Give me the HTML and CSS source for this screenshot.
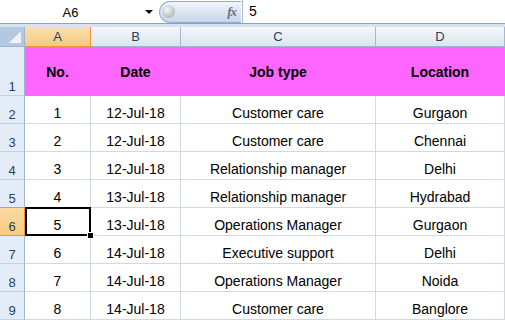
FILE: index.html
```html
<!DOCTYPE html>
<html lang="en">
<head>
    <meta charset="UTF-8">
    <title>Sheet1</title>
    <link rel="stylesheet" href="styles.css">
</head>
<body>
<div class="formula-bar">
    <div class="name-box">A6</div>
    <div class="name-arrow"></div>
    <div class="fx-pill">
        <span class="knob"></span>
        <span class="fx">fx</span>
    </div>
    <div class="formula">5</div>
</div>
<div class="band"></div>
<div class="sheet">
    <!-- column headers -->
    <div class="corner"><span class="corner-tri"></span></div>
    <div class="col-head selected">A</div>
    <div class="col-head">B</div>
    <div class="col-head">C</div>
    <div class="col-head">D</div>

    <div class="row-head">1</div>
    <div class="cell title">No.</div>
    <div class="cell title">Date</div>
    <div class="cell title">Job type</div>
    <div class="cell title">Location</div>

    <div class="row-head">2</div>
    <div class="cell">1</div>
    <div class="cell">12-Jul-18</div>
    <div class="cell">Customer care</div>
    <div class="cell">Gurgaon</div>

    <div class="row-head">3</div>
    <div class="cell">2</div>
    <div class="cell">12-Jul-18</div>
    <div class="cell">Customer care</div>
    <div class="cell">Chennai</div>

    <div class="row-head">4</div>
    <div class="cell">3</div>
    <div class="cell">12-Jul-18</div>
    <div class="cell">Relationship manager</div>
    <div class="cell">Delhi</div>

    <div class="row-head">5</div>
    <div class="cell">4</div>
    <div class="cell">13-Jul-18</div>
    <div class="cell">Relationship manager</div>
    <div class="cell">Hydrabad</div>

    <div class="row-head selected">6</div>
    <div class="cell active">5<span class="handle"></span></div>
    <div class="cell">13-Jul-18</div>
    <div class="cell">Operations Manager</div>
    <div class="cell">Gurgaon</div>

    <div class="row-head">7</div>
    <div class="cell">6</div>
    <div class="cell">14-Jul-18</div>
    <div class="cell">Executive support</div>
    <div class="cell">Delhi</div>

    <div class="row-head">8</div>
    <div class="cell">7</div>
    <div class="cell">14-Jul-18</div>
    <div class="cell">Operations Manager</div>
    <div class="cell">Noida</div>

    <div class="row-head">9</div>
    <div class="cell">8</div>
    <div class="cell">14-Jul-18</div>
    <div class="cell">Customer care</div>
    <div class="cell">Banglore</div>
</div>
</body>
</html>
```

FILE: styles.css
```css
*{
    margin:0;
    padding:0;
    box-sizing: border-box;
}
html,body{
    width:100%;
    height:100%;
    overflow: hidden;
}
body{
    background: #fff;
    font-family: "Liberation Sans", Arial, sans-serif;
    color: #000;
}
/* formula bar */
.formula-bar{
    height: 24px;
    display: flex;
    align-items: center;
    border-bottom: 1px solid #8aa2c0;
    background: #fff;
}
.name-box{
    width: 141px;
    text-align: center;
    font-size: 13px;
    padding-top: 1px;
}
.name-arrow{
    width: 18px;
    height: 100%;
    display: flex;
    align-items: center;
    padding-left: 4px;
}
.name-arrow::before{
    content: "";
    border-left: 4px solid transparent;
    border-right: 4px solid transparent;
    border-top: 4px solid #000;
}
.fx-pill{
    width: 82px;
    height: 22px;
    display: flex;
    align-items: center;
    justify-content: space-between;
    padding: 0 5px 0 2px;
    border: 1px solid #97acc8;
    border-right: none;
    border-radius: 11px 0 0 11px;
    background: linear-gradient(#f1f5fb, #d9e4f2 55%, #c6d6ea);
}
.knob{
    width: 13px;
    height: 13px;
    border-radius: 50%;
    background: radial-gradient(circle at 40% 35%, #f6f6f6, #bcc0c6 65%, #9ea3ab);
}
.fx{
    font-family: "Liberation Serif", serif;
    font-style: italic;
    font-weight: bold;
    font-size: 13px;
    color: #6d7178;
    letter-spacing: -1px;
}
.formula{
    flex: 1;
    height: 100%;
    border-left: 1px solid #a7b8cf;
    margin-left: 1px;
    padding-left: 6px;
    font-size: 14px;
    line-height: 23px;
}
.band{
    height: 3px;
    background: #d8e3f0;
}
/* grid */
.sheet{
    display: grid;
    grid-template-columns: 25px 66px 90px 195px 1fr;
    grid-template-rows: 20px 49px repeat(8, 28px);
}
.corner{
    background: #b4c8e2;
    border-right: 1px solid #9eb6ce;
    border-bottom: 1px solid #9eb6ce;
    position: relative;
}
.corner-tri{
    position: absolute;
    right: 3px;
    bottom: 3px;
    border-left: 12px solid transparent;
    border-bottom: 12px solid #eef3fa;
}
.col-head{
    display: flex;
    align-items: center;
    justify-content: center;
    font-size: 13px;
    color: #27415f;
    background: linear-gradient(#f4f7fb, #dde4ee);
    border-right: 1px solid #a3b8cf;
    border-bottom: 1px solid #9eb6ce;
}
.col-head.selected{
    background: linear-gradient(#f9e0b0, #f5c97f);
    border-right-color: #f29436;
    border-bottom-color: #f29436;
    border-left: 1px solid #f29436;
    margin-left: -1px;
}
.row-head{
    display: flex;
    align-items: flex-end;
    justify-content: center;
    padding-bottom: 1px;
    font-size: 13px;
    color: #27415f;
    background: #e4ecf7;
    border-right: 1px solid #9eb6ce;
    border-bottom: 1px solid #c5d2e2;
}
.row-head.selected{
    background: linear-gradient(#fbd9a0, #f7cb83);
    border-right-color: #f29436;
    border-bottom-color: #f29436;
    border-top: 1px solid #f29436;
    margin-top: -1px;
}
.cell{
    display: flex;
    align-items: flex-end;
    justify-content: center;
    padding-bottom: 2px;
    font-size: 14px;
    line-height: 16px;
    border-right: 1px solid #d0d7e5;
    border-bottom: 1px solid #d0d7e5;
    white-space: nowrap;
}
.cell.title{
    align-items: center;
    padding: 1px 0 0;
    font-weight: bold;
    background: #ff66ff;
    border-color: #ff66ff;
}
.cell.active{
    position: relative;
}
.cell.active::after{
    content: "";
    position: absolute;
    left: 0;
    top: -1px;
    right: -1px;
    bottom: -1px;
    border: 2px solid #000;
}
.handle{
    position: absolute;
    right: -3px;
    bottom: -3px;
    width: 5px;
    height: 5px;
    background: #000;
    border: 1px solid #fff;
    z-index: 1;
    box-sizing: content-box;
    margin: -1px;
}
```
